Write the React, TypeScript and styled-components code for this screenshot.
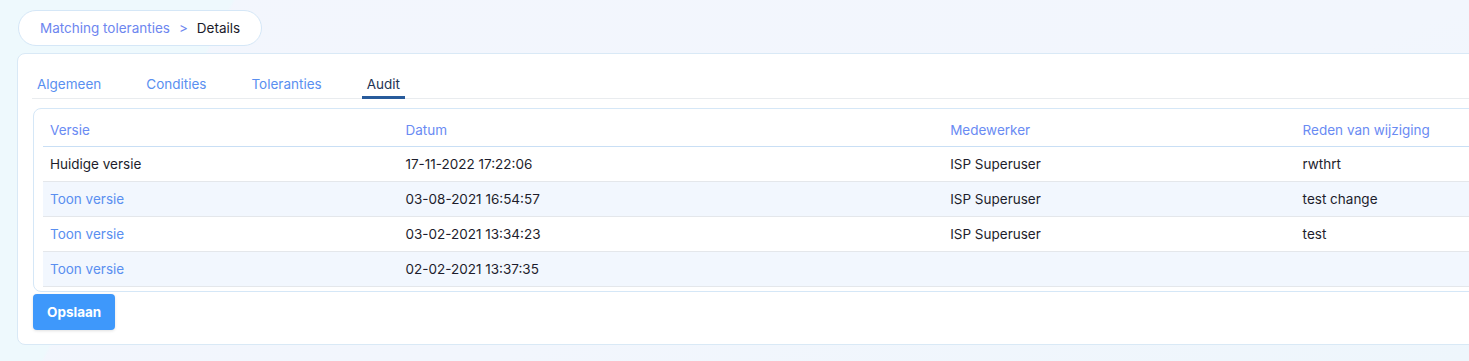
import React from "react";
import styled, { createGlobalStyle } from "styled-components";

const Global = createGlobalStyle`
  html, body { margin: 0; padding: 0; }
  body {
    overflow: hidden;
    font-family: Inter, "Noto Sans", sans-serif;
    background:
      linear-gradient(118deg, #eef9fd 0%, #eef9fd 14%, rgba(242,246,253,0) 14.2%),
      linear-gradient(160deg, #f3f6fd 0%, #f2f6fd 60%, #eef6fc 100%);
    min-height: 361px;
  }
`;

const Page = styled.div`
  width: 1600px;
  padding: 10px 0 0 18px;
  box-sizing: border-box;
  display: flex;
  flex-direction: column;
  align-items: flex-start;
`;

const Breadcrumb = styled.nav`
  height: 36px;
  box-sizing: border-box;
  display: flex;
  align-items: center;
  gap: 9px;
  padding: 0 21px 0 21px;
  background: #ffffff;
  border: 1px solid #d5e7f7;
  border-radius: 18px;
  font-size: 13.5px;
`;

const Crumb = styled.span<{ $active?: boolean }>`
  color: ${(p) => (p.$active ? "#1b1b2b" : "#6d86ef")};
`;

const Card = styled.section`
  margin: 7px 0 0 -1px;
  width: 1560px;
  box-sizing: border-box;
  background: #ffffff;
  border: 1px solid #d9e9f6;
  border-radius: 8px;
  padding: 20px 15px 14px 15px;
  display: flex;
  flex-direction: column;
  align-items: flex-start;
`;

const TabList = styled.div`
  align-self: stretch;
  display: flex;
  gap: 35px;
  margin-left: -1px;
  border-bottom: 1px solid #e9ecef;
`;

const Tab = styled.div<{ $active?: boolean }>`
  padding: 0 5px 2px;
  line-height: 20px;
  font-size: 13.5px;
  margin-bottom: -1px;
  color: ${(p) => (p.$active ? "#1f3556" : "#5a8ff0")};
  border-bottom: 3px solid ${(p) => (p.$active ? "#285b9b" : "transparent")};
`;

const TableWrap = styled.div`
  align-self: stretch;
  margin-top: 9px;
  border: 1px solid #d5e7f7;
  border-radius: 8px;
  padding: 4px 0 4px 9px;
`;

const Table = styled.table`
  width: 100%;
  border-collapse: collapse;
  font-size: 13.5px;
  table-layout: fixed;
`;

const Th = styled.th<{ $w: number }>`
  width: ${(p) => `${p.$w}px`};
  text-align: left;
  font-weight: 400;
  color: #6a8bf3;
  height: 33px;
  padding: 0 7px;
  white-space: nowrap;
  border-bottom: 1px solid #c9dff5;
`;

const Tr = styled.tr<{ $alt?: boolean }>`
  background: ${(p) => (p.$alt ? "#f2f7fe" : "#ffffff")};
`;

const Td = styled.td<{ $link?: boolean }>`
  height: 34px;
  padding: 0 7px;
  color: ${(p) => (p.$link ? "#5a8ff0" : "#1d1d2c")};
  border-bottom: 1px solid #e4e7eb;
  white-space: nowrap;
`;

const Button = styled.button`
  margin-top: 2px;
  height: 36px;
  padding: 0 14px;
  background: #3e98fb;
  color: #ffffff;
  border: none;
  border-radius: 4px;
  font-family: Inter, "Noto Sans", sans-serif;
  font-weight: 700;
  font-size: 13.5px;
  box-shadow: 0 1px 3px rgba(0, 0, 0, 0.12);
`;

const rows = [
  { v: "Huidige versie", link: false, d: "17-11-2022 17:22:06", m: "ISP Superuser", r: "rwthrt" },
  { v: "Toon versie", link: true, d: "03-08-2021 16:54:57", m: "ISP Superuser", r: "test change" },
  { v: "Toon versie", link: true, d: "03-02-2021 13:34:23", m: "ISP Superuser", r: "test" },
  { v: "Toon versie", link: true, d: "02-02-2021 13:37:35", m: "", r: "" },
];

export default function App() {
  return (
    <>
      <Global />
      <Page>
        <Breadcrumb>
          <Crumb>Matching toleranties</Crumb>
          <Crumb>&gt;</Crumb>
          <Crumb $active>Details</Crumb>
        </Breadcrumb>
        <Card>
          <TabList>
            <Tab>Algemeen</Tab>
            <Tab>Condities</Tab>
            <Tab>Toleranties</Tab>
            <Tab $active>Audit</Tab>
          </TabList>
          <TableWrap>
            <Table>
              <thead>
                <tr>
                  <Th $w={341}>Versie</Th>
                  <Th $w={530}>Datum</Th>
                  <Th $w={338}>Medewerker</Th>
                  <Th $w={250}>Reden van wijziging</Th>
                </tr>
              </thead>
              <tbody>
                {rows.map((r, i) => (
                  <Tr key={i} $alt={i % 2 === 1}>
                    <Td $link={r.link}>{r.v}</Td>
                    <Td>{r.d}</Td>
                    <Td>{r.m}</Td>
                    <Td>{r.r}</Td>
                  </Tr>
                ))}
              </tbody>
            </Table>
          </TableWrap>
          <Button>Opslaan</Button>
        </Card>
      </Page>
    </>
  );
}
